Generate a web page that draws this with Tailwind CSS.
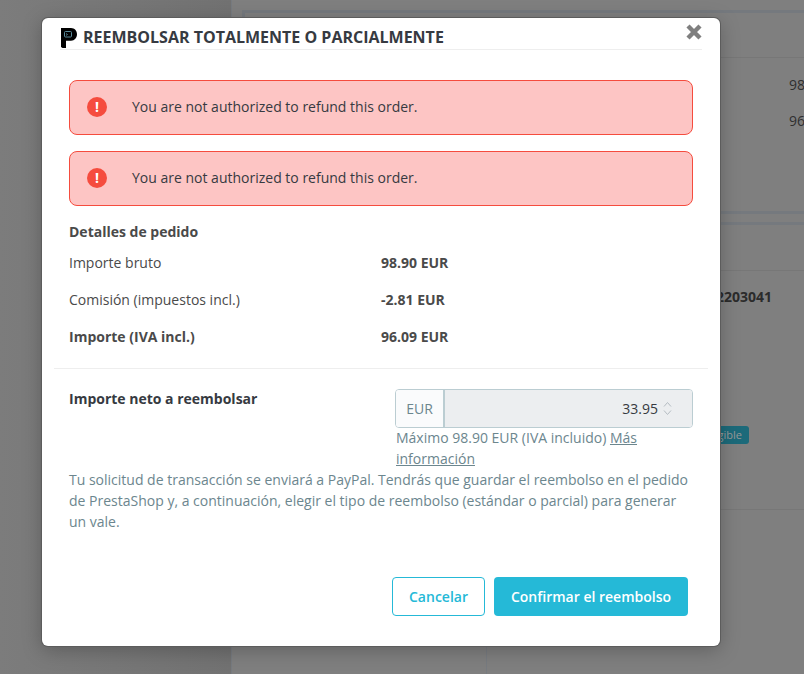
<!DOCTYPE html>
<html lang="es">
<head>
    <meta charset="UTF-8">
    <meta name="viewport" content="width=device-width, initial-scale=1.0">
    <title>Reembolsar</title>
    <script src="https://cdn.jsdelivr.net/npm/@tailwindcss/browser@4"></script>
</head>
<body class="relative w-[804px] h-[674px] overflow-hidden bg-[#7f7f7f] font-['Open_Sans',sans-serif] text-sm text-[#363a41]">
    <!-- dimmed page behind the modal -->
    <div class="flex h-full">
        <div class="w-[231px] shrink-0 bg-gradient-to-r from-[#7c7c7c] to-[#727272]"></div>
        <div class="flex-1 flex flex-col pl-[10px] border-l border-[#777b80]">
            <div class="mt-[10px] h-[204px] border-t-[3px] border-b-[3px] border-l-[3px] border-[#75797e]">
                <div class="h-[45px] border-b border-[#777777]"></div>
                <div class="relative h-[140px]">
                    <span class="absolute left-[544px] top-[17px] text-[#2f2f2f]">98</span>
                    <span class="absolute left-[544px] top-[53px] text-[#2f2f2f]">96</span>
                </div>
            </div>
            <div class="mt-[8px] flex-1 flex flex-col border-t-[3px] border-[#75797e]">
                <div class="h-[46px] border-b border-[#777777]"></div>
                <div class="relative h-[239px] border-b border-[#777777]">
                    <span class="absolute left-[474px] top-[16px] font-bold text-[#2b2b2b]">2203041</span>
                    <span class="absolute left-[440px] top-[155px] w-[67px] h-[18px] rounded-[3px] bg-[#1c6a7a] text-right pr-[7px] text-[11px] leading-[18px] text-[#999999]">gible</span>
                </div>
            </div>
        </div>
    </div>
    <div class="absolute left-[486px] top-[646px] h-[28px] w-px bg-[#777b80]"></div>

    <!-- modal -->
    <div class="absolute left-[42px] top-[18px] w-[678px] h-[628px] bg-white rounded-[6px] shadow-[0_0_0_1px_#5c5c5c,0_4px_20px_rgba(0,0,0,0.25)]">
        <div class="relative mx-[18px] h-[32px] flex items-start border-b border-[#eeeeee]">
            <svg class="mt-[10px] shrink-0" width="17" height="20" viewBox="0 0 17 20">
                <path d="M1 0H11C14.6 0 17 2.8 17 6.3C17 9.8 14.6 12.8 11 12.8H6V20H2.5L1 19Z" fill="#000000"/>
                <rect x="4.5" y="3.5" width="7" height="5.5" rx="1" fill="none" stroke="#5a8b9a" stroke-width="1"/>
                <path d="M6 5.5L7.5 6.5L6 7.5" fill="none" stroke="#5a8b9a" stroke-width="0.8"/>
            </svg>
            <h2 class="ml-[6px] mt-[9px] text-base leading-[20px] font-bold text-[#363a41] whitespace-nowrap">REEMBOLSAR TOTALMENTE O PARCIALMENTE</h2>
            <svg class="absolute right-0 top-[6px]" width="16" height="16" viewBox="0 0 16 16">
                <path d="M2 2L14 14M14 2L2 14" stroke="#7f7f7f" stroke-width="4.4"/>
            </svg>
        </div>

        <div class="px-[27px] pt-[30px]">
            <div class="flex flex-col gap-[16px]">
                <div class="h-[55px] pb-[2px] flex items-center bg-[#fdc5c4] border border-[#f54c3e] rounded-[8px]">
                    <span class="ml-[17px] w-[20px] h-[20px] rounded-full bg-[#f54c3e] text-white font-bold text-sm leading-[20px] text-center">!</span>
                    <span class="ml-[25px] text-[#363a41]">You are not authorized to refund this order.</span>
                </div>
                <div class="h-[55px] pb-[2px] flex items-center bg-[#fdc5c4] border border-[#f54c3e] rounded-[8px]">
                    <span class="ml-[17px] w-[20px] h-[20px] rounded-full bg-[#f54c3e] text-white font-bold text-sm leading-[20px] text-center">!</span>
                    <span class="ml-[25px] text-[#363a41]">You are not authorized to refund this order.</span>
                </div>
            </div>

            <h3 class="mt-[16px] font-bold leading-[20px] text-[#4a4a4a]">Detalles de pedido</h3>
            <div class="mt-[11px] flex flex-col gap-[17px] text-[#4a4a4a] leading-[20px]">
                <div class="flex"><span class="w-[312px]">Importe bruto</span><b>98.90 EUR</b></div>
                <div class="flex"><span class="w-[312px]">Comisión (impuestos incl.)</span><b>-2.81 EUR</b></div>
                <div class="flex"><b class="w-[312px]">Importe (IVA incl.)</b><b>96.09 EUR</b></div>
            </div>
        </div>

        <div class="mt-[21px] mx-[12px] border-t border-[#eeeeee]"></div>

        <div class="px-[27px] pt-[20px]">
            <div class="flex">
                <b class="w-[326px] leading-[20px] text-[#363a41]">Importe neto a reembolsar</b>
                <div class="w-[298px]">
                    <div class="h-[39px] flex border border-[#bbcdd2] rounded-[4px] overflow-hidden">
                        <span class="w-[49px] shrink-0 bg-[#fafbfc] border-r-[2px] border-[#bbcdd2] text-[#6c868e] flex items-center justify-center">EUR</span>
                        <div class="flex-1 bg-[#eceef0] flex items-center justify-end pr-[20px] text-[#363a41]">
                            33.95
                            <svg class="ml-[5px]" width="9" height="15" viewBox="0 0 9 15" fill="none" stroke="#b5bcc2" stroke-width="1">
                                <path d="M1 5.5L4.5 1.5L8 5.5M1 9.5L4.5 13.5L8 9.5"/>
                            </svg>
                        </div>
                    </div>
                    <p class="-mt-px pl-[1px] leading-[21px] text-[#6c868e]">Máximo 98.90 EUR (IVA incluido) <a href="#" class="underline">Más información</a></p>
                </div>
            </div>
            <p class="leading-[21px] text-[#6c868e]">Tu solicitud de transacción se enviará a PayPal. Tendrás que guardar el reembolso en el pedido de PrestaShop y, a continuación, elegir el tipo de reembolso (estándar o parcial) para generar un vale.</p>
        </div>

        <div class="mt-[45px] mr-[32px] flex justify-end gap-[9px]">
            <button class="w-[93px] h-[39px] rounded-[4px] border border-[#25b9d7] bg-white text-[#25b9d7] font-semibold">Cancelar</button>
            <button class="w-[194px] h-[39px] rounded-[4px] bg-[#25b9d7] text-white font-semibold">Confirmar el reembolso</button>
        </div>
    </div>
</body>
</html>
